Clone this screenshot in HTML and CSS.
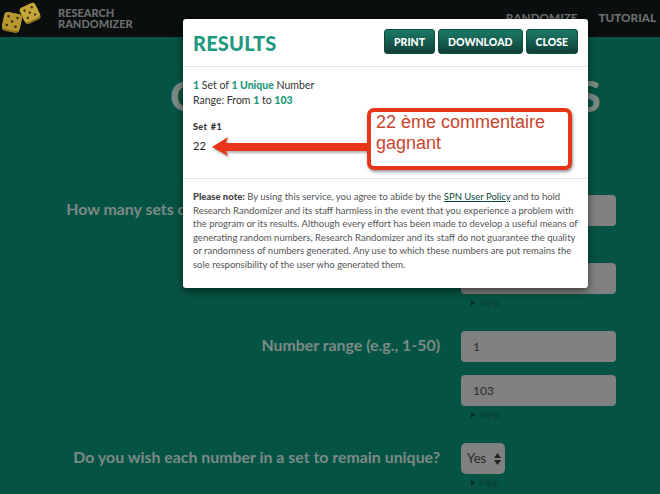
FILE: index.html
```html
<!DOCTYPE html>
<html lang="en">
<head>
    <meta charset="UTF-8">
    <title>Research Randomizer - Results</title>
    <link rel="stylesheet" href="styles.css">
</head>
<body>
    <header class="topbar">
        <div class="brand">
            <svg class="dice" width="44" height="34" viewBox="0 0 44 34">
                <g transform="rotate(12 10 21)">
                    <rect x="1" y="12" width="18" height="19" rx="3.500" fill="#8f7420"/>
                    <rect x="1" y="12" width="18" height="17" rx="3.500" fill="#b8982e"/>
                    <g fill="#3a3010">
                        <circle cx="5.500" cy="16" r="1.300"/><circle cx="14.500" cy="16" r="1.300"/>
                        <circle cx="10" cy="20.500" r="1.300"/>
                        <circle cx="5.500" cy="25" r="1.300"/><circle cx="14.500" cy="25" r="1.300"/>
                    </g>
                </g>
                <g transform="rotate(-25 28 12)">
                    <rect x="19.500" y="3.500" width="17" height="18" rx="3.500" fill="#8f7420"/>
                    <rect x="19.500" y="3.500" width="17" height="16" rx="3.500" fill="#c4a63a"/>
                    <g fill="#3a3010">
                        <circle cx="24" cy="7.500" r="1.200"/><circle cx="32" cy="7.500" r="1.200"/>
                        <circle cx="28" cy="11.500" r="1.200"/>
                        <circle cx="24" cy="15.500" r="1.200"/><circle cx="32" cy="15.500" r="1.200"/>
                    </g>
                </g>
            </svg>
            <div class="brand-name">RESEARCH<br>RANDOMIZER</div>
        </div>
        <nav class="topnav">
            <a>RANDOMIZE</a>
            <a>TUTORIAL</a>
        </nav>
    </header>

    <main class="page">
        <h1 class="page-title">GENERATE NUMBERS</h1>
        <div class="form-row">
            <label>How many sets of numbers do you want to generate?</label>
            <div class="field"><input class="text-input" type="text" value=""></div>
        </div>
        <div class="form-row row-help">
            <label></label>
            <div class="field">
                <input class="text-input" type="text" value="">
                <div class="help">Help</div>
            </div>
        </div>
        <div class="form-row row-range">
            <label>Number range (e.g., 1-50)</label>
            <div class="field">
                <input class="text-input" type="text" value="1">
            </div>
        </div>
        <div class="form-row row-range-end">
            <label></label>
            <div class="field">
                <input class="text-input" type="text" value="103">
                <div class="help">Help</div>
            </div>
        </div>
        <div class="form-row row-select">
            <label>Do you wish each number in a set to remain unique?</label>
            <div class="field">
                <div class="select-box">Yes
                    <svg width="7" height="12" viewBox="0 0 7 12"><path d="M3.500 0 7 5H0zM3.500 12 0 7h7z" fill="#222"/></svg>
                </div>
                <div class="help">Help</div>
            </div>
        </div>
    </main>

    <section class="modal">
        <div class="modal-head">
            <h2>RESULTS</h2>
            <div class="modal-btns">
                <button class="btn">PRINT</button>
                <button class="btn">DOWNLOAD</button>
                <button class="btn">CLOSE</button>
            </div>
        </div>
        <div class="modal-body">
            <p class="summary"><b>1</b> Set of <b>1 Unique</b> Number<br>Range: From <b>1</b> to <b>103</b></p>
            <h4>Set #1</h4>
            <p class="result">22</p>
        </div>
        <div class="modal-note">
            <p><strong>Please note:</strong> By using this service, you agree to abide by the <a>SPN User Policy</a> and to hold Research Randomizer and its staff harmless in the event that you experience a problem with the program or its results. Although every effort has been made to develop a useful means of generating random numbers, Research Randomizer and its staff do not guarantee the quality or randomness of numbers generated. Any use to which these numbers are put remains the sole responsibility of the user who generated them.</p>
        </div>
    </section>

    <!-- annotation pasted over the screenshot -->
    <svg class="arrow" width="160" height="24" viewBox="0 0 160 24">
        <path d="M1 12 17 2 15 8H158V16H15L17 21Z" fill="#e8351a"/>
    </svg>
    <div class="callout">22 ème commentaire gagnant</div>
</body>
</html>
```

FILE: styles.css
```css
:root {
    --page-color: #055443;
    --accent-color: #1f9a80;
    --dim-text: #7c8a86;
    --field-color: #808080;
}

* {
    box-sizing: border-box;
}

html, body {
    height: 494px;
}

body {
    margin: 0;
    background: var(--page-color);
    font-family: 'Lato', 'Liberation Sans', sans-serif;
    overflow: hidden;
    position: relative;
}

.topbar {
    height: 37px;
    background: #0b0e0e;
    display: flex;
    justify-content: space-between;
    padding: 0 4px 0 2px;
}

.brand {
    display: flex;
    align-items: center;
    gap: 12px;
}

.dice {
    margin-top: -1px;
}

.brand-name {
    font-size: 11px;
    font-weight: 900;
    line-height: 11px;
    color: #6c6f6f;
    margin-top: -1px;
}

.topnav {
    display: flex;
    gap: 21px;
    font-size: 11.700px;
    font-weight: 900;
    color: #6c6f6f;
    line-height: 34px;
}

.page {
    padding-top: 38px;
}

.page-title {
    margin: 0 0 62px 170px;
    width: 432px;
    font-size: 42px;
    font-weight: 900;
    line-height: 42px;
    color: var(--dim-text);
    white-space: nowrap;
    height: 58px;
}

.form-row {
    display: flex;
    gap: 21px;
    margin-bottom: 37px;
}

.form-row label {
    width: 440px;
    flex: none;
    text-align: right;
    font-size: 15.900px;
    font-weight: 700;
    line-height: 27px;
    color: var(--dim-text);
    white-space: nowrap;
}

.row-help {
    margin-bottom: 0;
}

.row-range {
    margin-top: 17px;
    margin-bottom: 13px;
}

.row-range-end {
    margin-bottom: 0;
}

.row-select {
    margin-top: 17px;
    margin-bottom: 0;
}

.text-input {
    display: block;
    width: 155px;
    height: 31px;
    border: 0;
    border-radius: 4px;
    background: var(--field-color);
    padding: 0 12px;
    font-family: 'Lato', sans-serif;
    font-size: 12px;
    color: #2a2a2a;
}

.help {
    height: 20px;
    padding: 1px 0 0 10px;
    font-size: 9.500px;
    line-height: 15px;
    color: #0a3a30;
}

.help::before {
    content: "";
    display: inline-block;
    border-left: 4px solid #0a2a24;
    border-top: 3px solid transparent;
    border-bottom: 3px solid transparent;
    margin-right: 5px;
}

.select-box {
    width: 44px;
    height: 31px;
    border-radius: 5px;
    background: var(--field-color);
    padding-left: 6px;
    font-size: 13px;
    line-height: 31px;
    color: #2a2a2a;
    display: flex;
    justify-content: space-between;
    align-items: center;
    padding-right: 4px;
}

.modal {
    position: absolute;
    left: 183px;
    top: 19px;
    width: 405px;
    height: 269px;
    background: #fff;
    border-radius: 3px;
    box-shadow: 0 3px 8px rgba(0, 0, 0, 0.55);
    color: #333;
    font-size: 10px;
}

.modal-head {
    padding: 10px 10px 0;
    display: flex;
    justify-content: space-between;
    align-items: flex-start;
    height: 48px;
    border-bottom: 1px solid #e4e4e4;
}

.modal-head h2 {
    margin: 3px 0 0;
    font-size: 20px;
    font-weight: 900;
    line-height: 22px;
    color: var(--accent-color);
    letter-spacing: 0.2px;
}

.modal-btns {
    display: flex;
    gap: 3px;
}

.btn {
    height: 25px;
    padding: 0 9px;
    border: 1px solid #0e4a3d;
    border-radius: 3px;
    background: linear-gradient(#1a7a66, #123f38);
    color: #fff;
    font-family: 'Lato', sans-serif;
    font-size: 10.500px;
    font-weight: 900;
}

.modal-body {
    height: 112px;
    padding: 11px 10px 0;
    border-bottom: 1px solid #e4e4e4;
}

.summary {
    margin: 0;
    font-size: 10.500px;
    line-height: 15px;
    color: #333;
}

.summary b {
    color: var(--accent-color);
    font-weight: 900;
}

.modal-body h4 {
    margin: 12px 0 0;
    font-size: 9px;
    font-weight: 900;
    line-height: 14px;
    letter-spacing: 0.4px;
    word-spacing: 1px;
}

.result {
    margin: 5px 0 0;
    font-size: 11px;
    line-height: 14px;
    color: #222;
}

.modal-note {
    padding: 11px 10px 0;
}

.modal-note p {
    margin: 0;
    font-size: 9.500px;
    line-height: 13.600px;
    color: #555;
}

.modal-note strong {
    color: #444;
    font-weight: 900;
}

.modal-note a {
    color: #0e4a3d;
    text-decoration: underline;
}

.arrow {
    position: absolute;
    left: 211px;
    top: 135px;
    filter: drop-shadow(1px 2px 1px rgba(0, 0, 0, 0.3));
}

.callout {
    position: absolute;
    left: 367px;
    top: 108px;
    width: 205px;
    height: 62px;
    padding: 0 5px;
    background: #fff;
    border: 4px solid #e8351a;
    border-radius: 7px;
    box-shadow: 1px 2px 3px rgba(0, 0, 0, 0.4);
    font-family: 'Liberation Sans', Arial, sans-serif;
    font-size: 18px;
    line-height: 21px;
    color: #c9442c;
}
```
